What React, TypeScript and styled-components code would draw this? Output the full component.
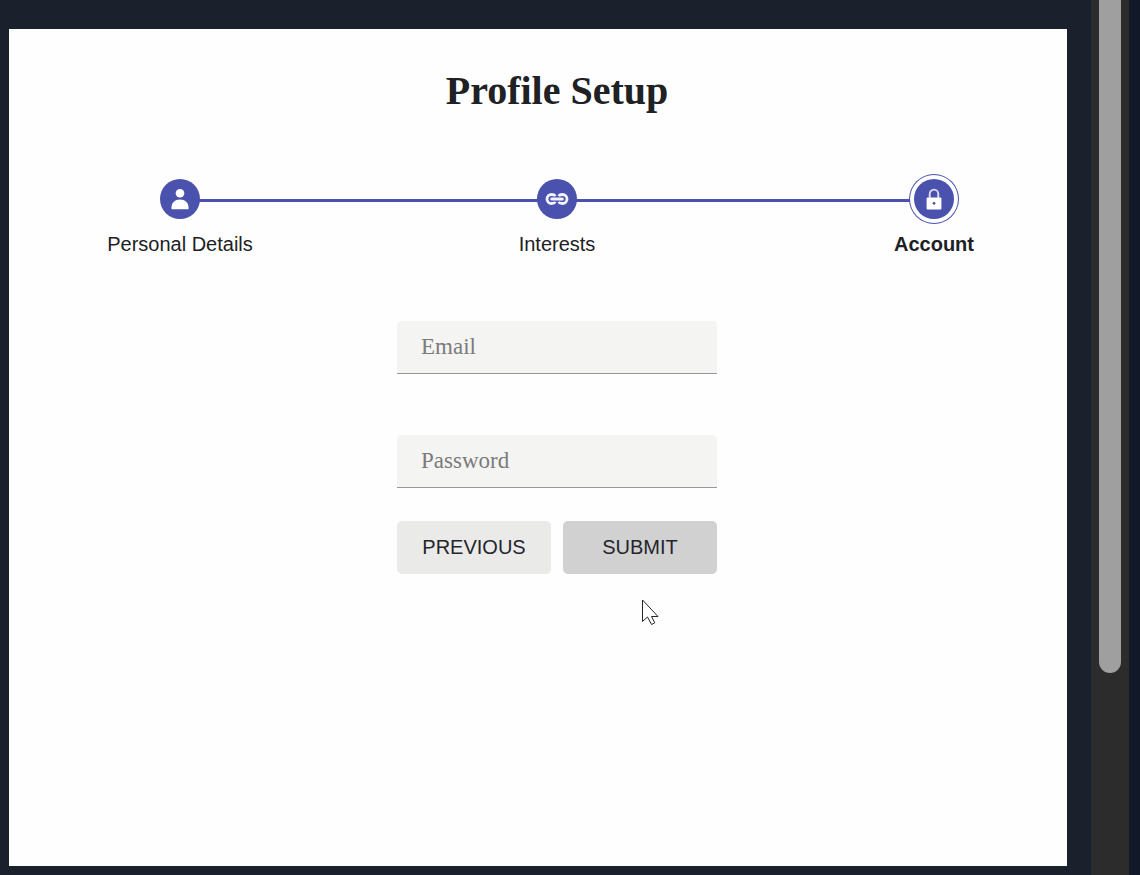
import React from "react";
import styled, { createGlobalStyle } from "styled-components";

const INDIGO = "#4a52ae";
const SANS = '"Liberation Sans", Arial, sans-serif';
const SERIF = '"Liberation Serif", "Times New Roman", serif';

const GlobalStyle = createGlobalStyle`
  *, *::before, *::after { box-sizing: border-box; }
  body { margin: 0; background: #111827; color: #202124; font-family: ${SANS}; }
`;

const Page = styled.div`
  display: flex;
  min-height: 100vh;
  padding-right: 11px;
  background: #111827;
`;

const Viewport = styled.div`
  flex: 1;
  display: flex;
  padding: 29px 24px 9px 9px;
  background: #1b202d;
`;

const Card = styled.main`
  flex: 1;
  padding: 38px 0 38px 38px;
  background: #fefefe;
`;

const ScrollTrack = styled.div`
  width: 38px;
  padding: 0 8px;
  background: #2c2c2c;
`;

const ScrollThumb = styled.div`
  width: 22px;
  height: 673px;
  border-radius: 0 0 11px 11px;
  background: #9f9f9f;
`;

const Title = styled.h1`
  margin: 0;
  font: bold 40px/48px ${SERIF};
  text-align: center;
`;

const Stepper = styled.ol`
  display: grid;
  grid-template-columns: repeat(3, 144px);
  justify-content: space-between;
  margin: 60px 0 0;
  padding: 0 61px;
  list-style: none;

  &::before {
    content: "";
    grid-row: 1;
    grid-column: 1 / -1;
    height: 3px;
    margin: 24px 72px 0;
    background: ${INDIGO};
  }
`;

const Step = styled.li<{ $column: number; $current?: boolean }>`
  grid-row: 1;
  grid-column: ${(p) => p.$column};
  display: flex;
  flex-direction: column;
  align-items: center;
  gap: 9px;
  font-size: 20px;
  line-height: 24px;
  font-weight: ${(p) => (p.$current ? "bold" : "normal")};
  white-space: nowrap;
`;

const Marker = styled.span<{ $current?: boolean }>`
  display: grid;
  place-items: center;
  width: 40px;
  height: 40px;
  margin: 4px 0;
  border-radius: 50%;
  background: ${INDIGO};
  box-shadow: ${(p) => (p.$current ? `0 0 0 4px #fefefe, 0 0 0 5px ${INDIGO}` : "none")};
`;

const Form = styled.form`
  position: relative;
  width: 320px;
  margin: 65px auto 0;
`;

const Field = styled.input`
  display: block;
  width: 100%;
  height: 53px;
  margin-bottom: 61px;
  padding: 0 24px;
  border: 0;
  border-bottom: 1px solid #98989a;
  border-radius: 5px 5px 0 0;
  outline: 0;
  background: #f4f4f3;
  color: #202124;
  font: 23px ${SERIF};

  &::placeholder { color: #7b7b7b; opacity: 1; }
  & + & { margin-bottom: 33px; }
`;

const Actions = styled.div`
  display: flex;
  gap: 12px;
`;

const Button = styled.button<{ $active?: boolean }>`
  flex: 1;
  height: 53px;
  padding: 0;
  border: 0;
  border-radius: 5px;
  background: ${(p) => (p.$active ? "#d1d1d1" : "#eaeae9")};
  color: #25252b;
  font: 20px ${SANS};
  text-transform: uppercase;
  cursor: pointer;
`;

const Pointer = styled.svg`
  position: absolute;
  top: 278px;
  left: 244px;
  pointer-events: none;
`;

const PersonIcon = () => (
  <svg width="20" height="22" viewBox="0 0 20 22" fill="#fff" aria-hidden="true">
    <circle cx="10" cy="5.3" r="4.300" />
    <path d="M1.500 21.200v-2C1.500 14.600 5 11.400 10 11.400s8.500 3.200 8.500 7.800v2z" />
  </svg>
);

const LinkIcon = () => (
  <svg width="24" height="16" viewBox="0 0 24 16" fill="none" stroke="#f3f4fb" aria-hidden="true">
    <path
      d="M10.500 5C9.700 4 8.500 3.500 6.500 3.500a4.500 4.500 0 0 0 0 9c2 0 3.200-.5 4-1.500M13.500 5c.8-1 2-1.500 4-1.500a4.500 4.500 0 0 1 0 9c-2 0-3.200-.5-4-1.500"
      strokeWidth="2.800"
    />
    <path d="M6.700 8h10.600" strokeWidth="3" strokeLinecap="round" />
  </svg>
);

const LockIcon = () => (
  <svg width="16" height="22" viewBox="0 0 16 22" aria-hidden="true">
    <path d="M3.700 10V5.900a4.300 4.300 0 0 1 8.600 0V10" fill="none" stroke="#dcdef2" strokeWidth="1.900" />
    <rect x="0.600" y="9.500" width="14.800" height="12" rx="1" fill="#fff" />
    <circle cx="8" cy="15.300" r="1.400" fill={INDIGO} />
  </svg>
);

const steps = [
  { label: "Personal Details", icon: <PersonIcon /> },
  { label: "Interests", icon: <LinkIcon /> },
  { label: "Account", icon: <LockIcon />, current: true },
];

export default function App() {
  return (
    <Page>
      <GlobalStyle />
      <Viewport>
        <Card>
          <Title>Profile Setup</Title>
          <Stepper>
            {steps.map((step, i) => (
              <Step
                key={step.label}
                $column={i + 1}
                $current={step.current}
                aria-current={step.current ? "step" : undefined}
              >
                <Marker $current={step.current}>{step.icon}</Marker>
                {step.label}
              </Step>
            ))}
          </Stepper>
          <Form onSubmit={(e) => e.preventDefault()}>
            <Field type="email" placeholder="Email" aria-label="Email" />
            <Field type="password" placeholder="Password" aria-label="Password" />
            <Actions>
              <Button type="button">Previous</Button>
              <Button type="submit" $active>Submit</Button>
            </Actions>
            <Pointer width="19" height="28" viewBox="0 0 19 28" aria-hidden="true">
              <path
                d="M1.500 1v21.500l5-4.500 4 7.500 3.300-1.700-3.300-6.300h6.500z"
                fill="#fff"
                stroke="#25252b"
                strokeWidth="1"
              />
            </Pointer>
          </Form>
        </Card>
      </Viewport>
      <ScrollTrack aria-hidden="true">
        <ScrollThumb />
      </ScrollTrack>
    </Page>
  );
}
